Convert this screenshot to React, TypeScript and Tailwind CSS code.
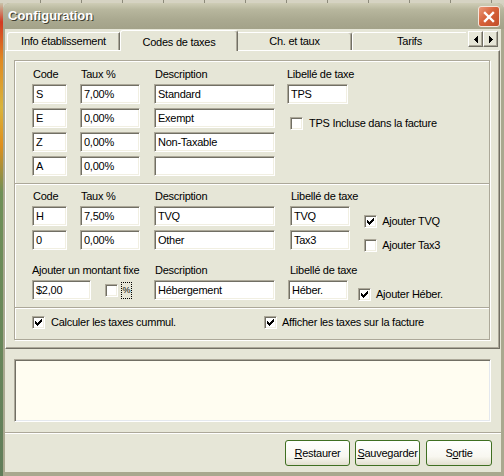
import React from "react";

const CHECK_PX: [number, number][] = [
  [6, 0], [5, 1], [6, 1], [0, 2], [4, 2], [5, 2], [6, 2],
  [0, 3], [1, 3], [3, 3], [4, 3], [5, 3],
  [0, 4], [1, 4], [2, 4], [3, 4], [4, 4],
  [1, 5], [2, 5], [3, 5], [2, 6],
];

function CheckMark() {
  return (
    <svg width="7" height="7" viewBox="0 0 7 7" shapeRendering="crispEdges">
      {CHECK_PX.map(([x, y], i) => (
        <rect key={i} x={x} y={y} width="1" height="1" fill="#000" />
      ))}
    </svg>
  );
}

function Box({ checked = false, className = "" }: { checked?: boolean; className?: string }) {
  return (
    <span
      className={`flex h-[13px] w-[13px] shrink-0 items-center justify-center border border-t-[#aca899] border-l-[#aca899] border-b-white border-r-white bg-white shadow-[inset_1px_1px_0_#716f64,inset_-1px_-1px_0_#f1efe2] ${className}`}
    >
      {checked && <CheckMark />}
    </span>
  );
}

function Field({ v, className = "" }: { v: string; className?: string }) {
  return (
    <div
      className={`flex h-[20px] shrink-0 items-center whitespace-nowrap border border-t-[#aca899] border-l-[#aca899] border-b-white border-r-white bg-white pl-[3px] leading-none shadow-[inset_1px_1px_0_#716f64,inset_-1px_-1px_0_#f1efe2] ${className}`}
    >
      {v}
    </div>
  );
}

function Label({ t, className = "" }: { t: string; className?: string }) {
  return <div className={`h-[13px] whitespace-nowrap leading-[13px] ${className}`}>{t}</div>;
}

function Col({ label, values, className = "", w }: { label: string; values: string[]; className?: string; w: string }) {
  return (
    <div className={`flex flex-col ${className}`}>
      <Label t={label} className="pl-[1px]" />
      <div className="mt-[3px] flex flex-col gap-[4px]">
        {values.map((v, i) => (
          <Field key={i} v={v} className={w} />
        ))}
      </div>
    </div>
  );
}

function Sep({ className = "" }: { className?: string }) {
  return <div className={`h-[2px] shrink-0 border-t border-[#aca899] bg-white ${className}`} />;
}

function Tri({ dir }: { dir: "l" | "r" }) {
  return (
    <svg width="4" height="7" viewBox="0 0 4 7" shapeRendering="crispEdges">
      {dir === "l" ? <polygon points="4,0 4,7 0,3.5" fill="#000" /> : <polygon points="0,0 0,7 4,3.5" fill="#000" />}
    </svg>
  );
}

export default function App() {
  return (
    <div className="flex h-[476px] w-[504px] flex-col overflow-hidden bg-[#d3d0bf] font-['Liberation_Sans',Arial,sans-serif] text-[11px] tracking-[-0.25px] text-black">
      {/* desktop strip at top */}
      <div className="h-[3px] shrink-0 bg-[repeating-linear-gradient(to_right,#d6d3c3_0px,#d6d3c3_40px,#8d8b7b_40px,#8d8b7b_41px)]" />
      <div className="flex min-h-0 flex-1">
        <div className="w-[3px] shrink-0 bg-[linear-gradient(to_bottom,#c8c2a8_0%,#d23a22_4%,#e08a22_12%,#d9b43c_22%,#e0901c_30%,#6f9058_40%,#617d5a_100%)]" />
        <div className="flex min-w-0 flex-1 flex-col overflow-hidden rounded-t-[7px] bg-[#a9a88f]">
          {/* title bar */}
          <div className="flex h-[26px] shrink-0 items-center bg-[linear-gradient(to_bottom,#cfcdb6_0%,#b8b79e_25%,#abaa91_60%,#a3a289_100%)] pl-[5px] pr-[4px]">
            <span className="text-[13px] font-bold tracking-normal text-white [text-shadow:1px_1px_0_#3e3d31]">
              Configuration
            </span>
            <div className="ml-auto mt-[1px] flex h-[21px] w-[22px] items-center justify-center rounded-[3px] border border-[#f4e6dc] bg-[linear-gradient(135deg,#ea9a7a_0%,#d7623a_45%,#c24d2a_100%)]">
              <svg width="12" height="12" viewBox="0 0 12 12">
                <path d="M2 2 L10 10 M10 2 L2 10" stroke="#fff" strokeWidth="2.4" strokeLinecap="square" />
              </svg>
            </div>
          </div>

          {/* body */}
          <div className="flex min-h-0 flex-1 flex-col border-b-4 border-l-2 border-r-[3px] border-[#a9a88f] bg-[#e6e6d7]">
            {/* tabs */}
            <div className="relative z-10 flex h-[21px] shrink-0 items-end pl-[2px]">
              <div className="flex h-[18px] w-[113px] items-center justify-center rounded-tl-[3px] border-l border-t border-white border-r border-r-[#716f64] shadow-[inset_-1px_0_0_#aca899]">
                Info établissement
              </div>
              <div className="relative z-10 -mb-px flex h-[21px] w-[118px] items-start justify-center rounded-t-[3px] border-l border-t border-white border-r border-r-[#716f64] bg-[#e6e6d7] pt-[3px] shadow-[inset_-1px_0_0_#aca899]">
                Codes de taxes
              </div>
              <div className="flex h-[18px] w-[114px] items-center justify-center rounded-tr-[3px] border-t border-white border-r border-r-[#716f64] shadow-[inset_-1px_0_0_#aca899]">
                Ch. et taux
              </div>
              <div className="flex h-[18px] w-[114px] items-center justify-center rounded-tl-[3px] border-l border-t border-white">
                Tarifs
              </div>
              <div className="mb-[3px] ml-[2px] flex self-end">
                <div className="flex h-[16px] w-[15px] items-center justify-center border border-b-[#716f64] border-l-white border-r-[#716f64] border-t-white shadow-[inset_-1px_-1px_0_#aca899]">
                  <Tri dir="l" />
                </div>
                <div className="flex h-[16px] w-[15px] items-center justify-center border border-b-[#716f64] border-l-white border-r-[#716f64] border-t-white shadow-[inset_-1px_-1px_0_#aca899]">
                  <Tri dir="r" />
                </div>
              </div>
            </div>

            {/* tab panel */}
            <div className="h-[299px] w-[495px] shrink-0 border border-b-[#716f64] border-l-white border-r-[#716f64] border-t-white pl-[8px] pt-[9px] shadow-[inset_-1px_-1px_0_#aca899]">
              <div className="flex h-[280px] w-[476px] flex-col border border-[#aca899] pl-[17px] pt-[7px] shadow-[inset_1px_1px_0_#fff,1px_1px_0_#fff]">
                {/* section 1 */}
                <div className="flex">
                  <Col label="Code" values={["S", "E", "Z", "A"]} w="w-[35px]" />
                  <Col label="Taux %" values={["7,00%", "0,00%", "0,00%", "0,00%"]} w="w-[60px]" className="ml-[13px]" />
                  <Col label="Description" values={["Standard", "Exempt", "Non-Taxable", ""]} w="w-[121px]" className="ml-[14px]" />
                  <div className="ml-[12px] flex flex-col">
                    <Label t="Libellé de taxe" />
                    <Field v="TPS" className="mt-[3px] w-[61px]" />
                    <div className="ml-[3px] mt-[13px] flex h-[13px] items-center gap-[6px] whitespace-nowrap">
                      <Box />
                      <span>TPS Incluse dans la facture</span>
                    </div>
                  </div>
                </div>

                <Sep className="-ml-[17px] mt-[7px] w-[474px]" />

                {/* section 2 */}
                <div className="mt-[5px] flex">
                  <Col label="Code" values={["H", "0"]} w="w-[35px]" />
                  <Col label="Taux %" values={["7,50%", "0,00%"]} w="w-[60px]" className="ml-[13px]" />
                  <Col label="Description" values={["TVQ", "Other"]} w="w-[121px]" className="ml-[14px]" />
                  <Col label="Libellé de taxe" values={["TVQ", "Tax3"]} w="w-[60px]" className="ml-[15px]" />
                  <div className="ml-[6px] flex flex-col gap-[11px] pt-[25px]">
                    <div className="flex h-[13px] items-center gap-[5px] whitespace-nowrap">
                      <Box checked />
                      <span>Ajouter TVQ</span>
                    </div>
                    <div className="flex h-[13px] items-center gap-[5px] whitespace-nowrap">
                      <Box />
                      <span>Ajouter Tax3</span>
                    </div>
                  </div>
                </div>

                {/* row 3 */}
                <div className="mt-[12px] flex h-[13px] leading-[13px]">
                  <span className="w-[122px] whitespace-nowrap">Ajouter un montant fixe</span>
                  <span className="w-[136px] whitespace-nowrap pl-[1px]">Description</span>
                  <span className="whitespace-nowrap">Libellé de taxe</span>
                </div>
                <div className="mt-[3px] flex">
                  <Field v="$2,00" className="w-[59px]" />
                  <Box className="ml-[14px] mt-[4px]" />
                  <span className="ml-[3px] mt-[2px] flex h-[17px] w-[11px] items-center justify-center border border-dotted border-black text-[9px] leading-none tracking-normal">
                    %
                  </span>
                  <Field v="Hébergement" className="ml-[22px] w-[121px]" />
                  <Field v="Héber." className="ml-[13px] w-[60px]" />
                  <div className="ml-[10px] mt-[8px] flex h-[13px] items-center gap-[5px] whitespace-nowrap">
                    <Box checked />
                    <span>Ajouter Héber.</span>
                  </div>
                </div>

                <Sep className="-ml-[17px] mt-[6px] w-[474px]" />

                <div className="mt-[7px] flex h-[13px] items-center">
                  <div className="flex w-[232px] items-center gap-[6px] whitespace-nowrap">
                    <Box checked />
                    <span>Calculer les taxes cummul.</span>
                  </div>
                  <div className="flex items-center gap-[5px] whitespace-nowrap">
                    <Box checked />
                    <span>Afficher les taxes sur la facture</span>
                  </div>
                </div>
              </div>
            </div>

            {/* memo */}
            <div className="ml-[9px] mt-[10px] h-[63px] w-[477px] shrink-0 border border-b-white border-l-[#aca899] border-r-white border-t-[#aca899] bg-[#fffdf1] shadow-[inset_1px_1px_0_#716f64,inset_-1px_-1px_0_#e4e8ee]" />

            <Sep className="mt-[10px] w-full" />

            {/* buttons */}
            <div className="mt-[6px] flex justify-end pr-[9px]">
              <div className="flex h-[26px] w-[65px] items-center justify-center rounded-[3px] border border-[#3f6f21] bg-[linear-gradient(to_bottom,#ffffff_0%,#f8f7f0_65%,#e2dfcf_100%)]">
                <span>
                  <span className="underline">R</span>estaurer
                </span>
              </div>
              <div className="ml-[5px] flex h-[26px] w-[65px] items-center justify-center rounded-[3px] border border-[#3f6f21] bg-[linear-gradient(to_bottom,#ffffff_0%,#f8f7f0_65%,#e2dfcf_100%)]">
                <span>
                  <span className="underline">S</span>auvegarder
                </span>
              </div>
              <div className="ml-[6px] flex h-[26px] w-[66px] items-center justify-center rounded-[3px] border border-[#3f6f21] bg-[linear-gradient(to_bottom,#ffffff_0%,#f8f7f0_65%,#e2dfcf_100%)]">
                <span>
                  S<span className="underline">o</span>rtie
                </span>
              </div>
            </div>
          </div>
        </div>
      </div>
    </div>
  );
}
